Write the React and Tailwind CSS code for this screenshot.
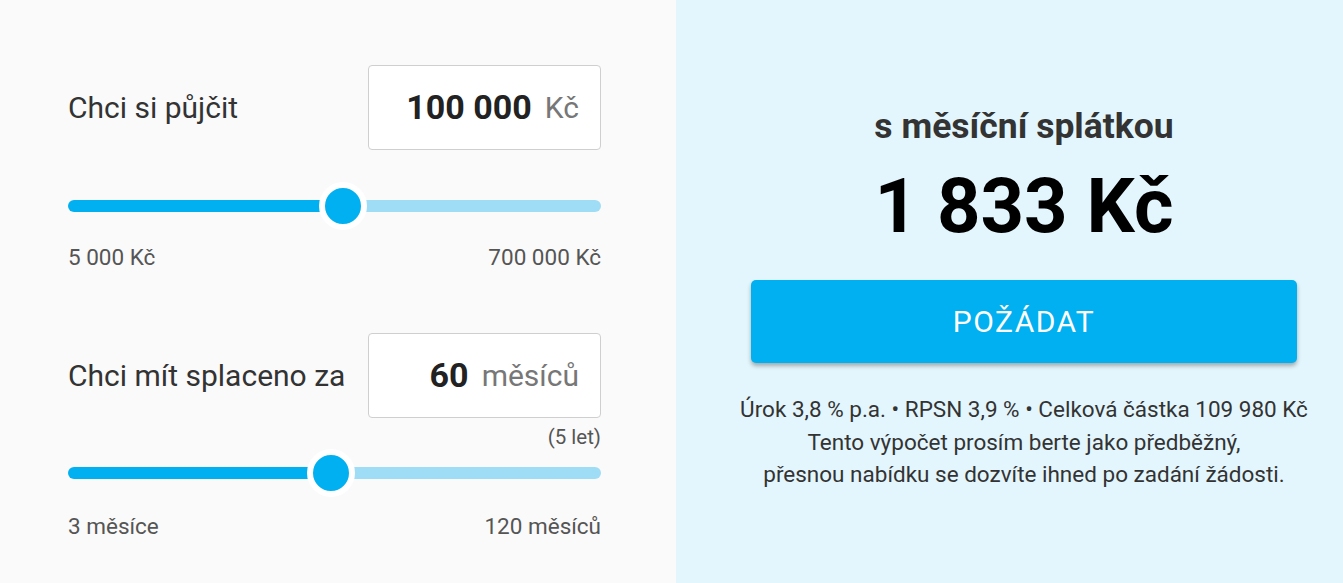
const Slider = ({ percent }) => {
  return (
    <div className="relative flex h-[48px] items-center">
      <div className="flex h-[12px] w-full overflow-hidden rounded-full">
        <div className="h-full bg-[#00b0f0]" style={{ width: `${percent}%` }} />
        <div className="h-full flex-1 bg-[#9fddf6]" />
      </div>
      <div
        className="absolute top-0 h-[48px] w-[48px] -translate-x-1/2 rounded-full border-[6px] border-white bg-[#00b0f0]"
        style={{ left: `${percent}%` }}
      />
    </div>
  );
};

const Field = ({ label, value, unit }) => {
  return (
    <div className="flex items-center justify-between">
      <span className="text-[30px] text-[#333]">{label}</span>
      <div className="flex h-[85px] w-[233px] items-center justify-end gap-[13px] rounded-[4px] border border-[#cfcfcf] bg-white pr-[21px]">
        <span className="text-[34px] font-bold text-[#222]">{value}</span>
        <span className="text-[30px] text-[#777]">{unit}</span>
      </div>
    </div>
  );
};

const App = () => {
  return (
    <div
      className="flex h-[583px] w-full"
      style={{ fontFamily: 'Roboto, "Noto Sans", sans-serif' }}
    >
      <div className="flex w-[676px] shrink-0 flex-col bg-[#fafafa] pl-[68px] pr-[75px] pt-[65px]">
        <Field label="Chci si půjčit" value="100 000" unit="Kč" />
        <div className="mt-[32px]">
          <Slider percent={51.6} />
        </div>
        <div className="mt-[12px] flex justify-between text-[22.5px] leading-[30px] text-[#555]">
          <span>5 000 Kč</span>
          <span>700 000 Kč</span>
        </div>
        <div className="mt-[61px]">
          <Field label="Chci mít splaceno za" value="60" unit="měsíců" />
        </div>
        <div className="mt-[6px] text-right text-[20.5px] leading-[26px] text-[#555]">(5 let)</div>
        <div className="mt-[-1px]">
          <Slider percent={49.4} />
        </div>
        <div className="mt-[14px] flex justify-between text-[22.5px] leading-[30px] text-[#555]">
          <span>3 měsíce</span>
          <span>120 měsíců</span>
        </div>
      </div>
      <div className="flex min-w-0 flex-1 flex-col items-center bg-[#e4f6fd] pl-[75px] pr-[46px] pt-[104px]">
        <div className="text-[35.5px] font-bold leading-[44px] text-[#333]">s měsíční splátkou</div>
        <div className="mt-[14px] text-[76px] font-bold leading-[88px] text-black">1 833 Kč</div>
        <button className="mt-[30px] flex h-[83px] w-full items-center justify-center rounded-[5px] bg-[#00b0f0] text-[30px] tracking-[1.5px] text-white shadow-[0_3px_4px_rgba(0,0,0,0.3)]">
          POŽÁDAT
        </button>
        <div className="mt-[30px] whitespace-nowrap text-center text-[22.5px] leading-[32.5px] text-[#333]">
          <div>Úrok 3,8 % p.a. • RPSN 3,9 % • Celková částka 109 980 Kč</div>
          <div>Tento výpočet prosím berte jako předběžný,</div>
          <div>přesnou nabídku se dozvíte ihned po zadání žádosti.</div>
        </div>
      </div>
    </div>
  );
};

export default App;
